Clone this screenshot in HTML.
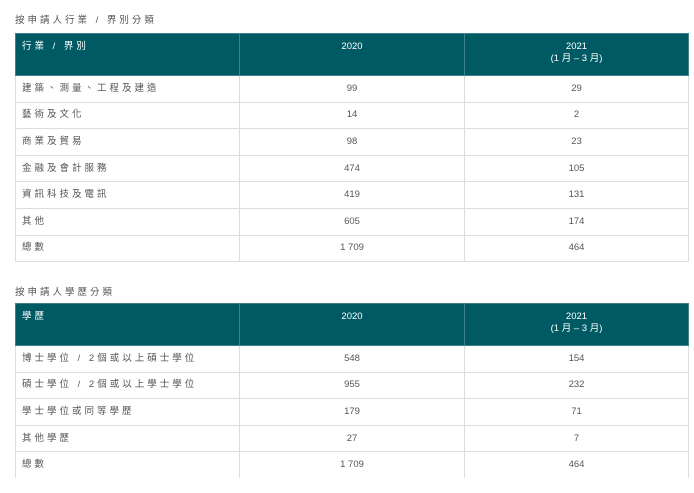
<!DOCTYPE html>
<html><head><meta charset="utf-8"><style>
body{margin:0;width:694px;height:493px;overflow:hidden;background:#fff;font-family:"Liberation Sans","Noto Sans CJK TC",sans-serif;color:#555;font-size:9.5px;}
.t{position:absolute;left:15px;letter-spacing:3px;color:#555;font-size:9.5px}
table{position:absolute;left:15px;width:674px;border-collapse:collapse;table-layout:fixed}
td,th{border:1px solid #ddd;padding:0 6px;font-weight:normal;height:25.6px;line-height:12px}
th{background:#005a64;color:#fff;height:34px;vertical-align:top;padding-top:7px;border-color:#3f8289}
td:first-child,th:first-child{text-align:left;letter-spacing:3px}
td,th{text-align:center}
col.a{width:224px}col.b{width:225px}
</style></head><body>
<div class="t" style="top:12px">按申請人行業 / 界別分類</div>
<table style="top:33px"><col class="a"><col class="b"><col>
<tr><th>行業 / 界別</th><th>2020</th><th>2021<br>(1 月 – 3 月)</th></tr>
<tr><td>建築、測量、工程及建造</td><td>99</td><td>29</td></tr>
<tr><td>藝術及文化</td><td>14</td><td>2</td></tr>
<tr><td>商業及貿易</td><td>98</td><td>23</td></tr>
<tr><td>金融及會計服務</td><td>474</td><td>105</td></tr>
<tr><td>資訊科技及電訊</td><td>419</td><td>131</td></tr>
<tr><td>其他</td><td>605</td><td>174</td></tr>
<tr><td>總數</td><td>1 709</td><td>464</td></tr>
</table>
<div class="t" style="top:284px">按申請人學歷分類</div>
<table style="top:303px"><col class="a"><col class="b"><col>
<tr><th>學歷</th><th>2020</th><th>2021<br>(1 月 – 3 月)</th></tr>
<tr><td>博士學位 / 2個或以上碩士學位</td><td>548</td><td>154</td></tr>
<tr><td>碩士學位 / 2個或以上學士學位</td><td>955</td><td>232</td></tr>
<tr><td>學士學位或同等學歷</td><td>179</td><td>71</td></tr>
<tr><td>其他學歷</td><td>27</td><td>7</td></tr>
<tr><td style="border-bottom:none">總數</td><td style="border-bottom:none">1 709</td><td style="border-bottom:none">464</td></tr>
</table>
</body></html>
